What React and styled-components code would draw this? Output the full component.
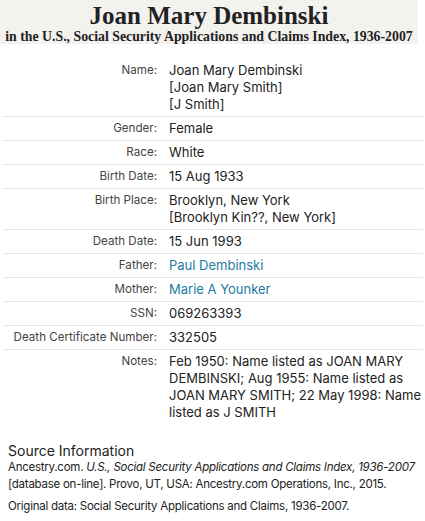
import React from "react";
import styled, { createGlobalStyle } from "styled-components";

const Global = createGlobalStyle`
  html, body { margin: 0; padding: 0; background: #fff; }
  body { font-family: Inter, "Liberation Sans", Arial, sans-serif; color: #222; }
`;

const Page = styled.div`
  width: 425px;
  display: flex;
  flex-direction: column;
`;

const Header = styled.header`
  width: 418px;
  height: 44px;
  background: #f4f2ef;
  display: flex;
  flex-direction: column;
  align-items: center;
  font-family: "Liberation Serif", "Times New Roman", serif;
  font-weight: bold;
  color: #222;
`;

const Title = styled.h1`
  margin: 0;
  font-size: 25px;
  line-height: 27px;
  padding-top: 2px;
`;

const Subtitle = styled.div`
  font-size: 13.8px;
  line-height: 15px;
  white-space: nowrap;
`;

const Table = styled.div`
  margin: 15px 2px 0 3px;
  display: flex;
  flex-direction: column;
`;

const Row = styled.div`
  display: grid;
  grid-template-columns: 154px 1fr;
  column-gap: 12px;
  padding: 3px 0;
  border-top: ${(p) => (p.$first ? "none" : "1px solid #e6e6e6")};
  font-size: 13px;
  line-height: 17px;
`;

const Label = styled.div`
  text-align: right;
  color: #444;
  font-size: 11.6px;
`;

const Value = styled.div`
  color: #222;
`;

const Link = styled.a`
  color: #1d7ba0;
  text-decoration: none;
`;

const Source = styled.section`
  margin: 18px 4px 0 8px;
  display: flex;
  flex-direction: column;
`;

const SourceTitle = styled.div`
  font-size: 14px;
  line-height: 17px;
  color: #222;
`;

const SourceText = styled.p`
  margin: 0;
  font-size: 11.5px;
  line-height: 17px;
  color: #222;
  letter-spacing: -0.25px;
  & + & { margin-top: 5px; }
`;

const rows = [
  ["Name:", ["Joan Mary Dembinski", "[Joan Mary Smith]", "[J Smith]"]],
  ["Gender:", ["Female"]],
  ["Race:", ["White"]],
  ["Birth Date:", ["15 Aug 1933"]],
  ["Birth Place:", ["Brooklyn, New York", "[Brooklyn Kin??, New York]"]],
  ["Death Date:", ["15 Jun 1993"]],
  ["Father:", ["Paul Dembinski"], true],
  ["Mother:", ["Marie A Younker"], true],
  ["SSN:", ["069263393"]],
  ["Death Certificate Number:", ["332505"]],
  [
    "Notes:",
    [
      "Feb 1950: Name listed as JOAN MARY DEMBINSKI; Aug 1955: Name listed as JOAN MARY SMITH; 22 May 1998: Name listed as J SMITH",
    ],
  ],
];

export default function App() {
  return (
    <Page>
      <Global />
      <Header>
        <Title>Joan Mary Dembinski</Title>
        <Subtitle>in the U.S., Social Security Applications and Claims Index, 1936-2007</Subtitle>
      </Header>
      <Table>
        {rows.map(([label, values, link], i) => (
          <Row key={label} $first={i === 0}>
            <Label>{label}</Label>
            <Value>
              {values.map((v) => (
                <div key={v}>{link ? <Link href="#">{v}</Link> : v}</div>
              ))}
            </Value>
          </Row>
        ))}
      </Table>
      <Source>
        <SourceTitle>Source Information</SourceTitle>
        <SourceText>
          Ancestry.com. <i>U.S., Social Security Applications and Claims Index, 1936-2007</i> [database
          on-line]. Provo, UT, USA: Ancestry.com Operations, Inc., 2015.
        </SourceText>
        <SourceText>Original data: Social Security Applications and Claims, 1936-2007.</SourceText>
      </Source>
    </Page>
  );
}
